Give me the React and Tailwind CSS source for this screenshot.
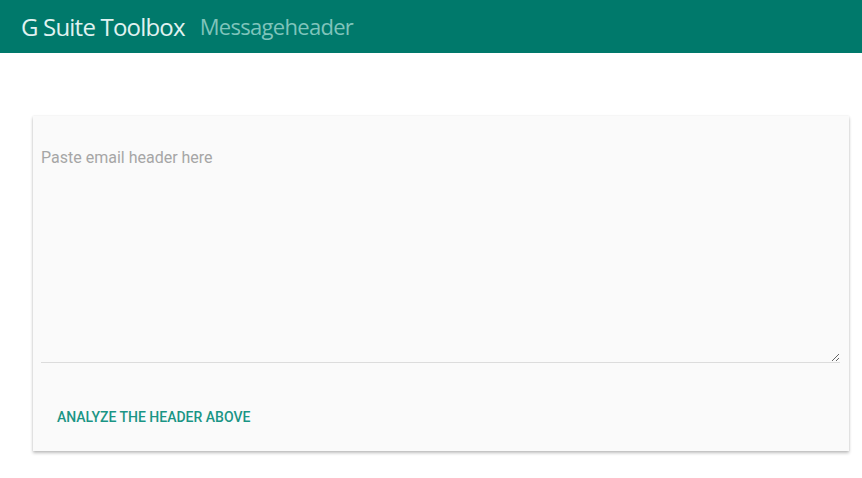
export default function App() {
  return (
    <div className="min-h-[478px] bg-white" style={{ fontFamily: "Roboto, 'Noto Sans', sans-serif" }}>
      {/* Top bar */}
      <header className="h-[53px] bg-[#00796b] flex items-center pl-[21px] gap-[15px]">
        <span className="text-[24px] tracking-[-0.8px] text-[#e0f2f1] font-normal" style={{ fontFamily: "'Open Sans', Roboto, sans-serif" }}>
          G Suite Toolbox
        </span>
        <span className="text-[22px] tracking-[-0.7px] text-[#7fc4bb]" style={{ fontFamily: "'Open Sans', Roboto, sans-serif" }}>
          Messageheader
        </span>
      </header>

      {/* Card */}
      <div className="pl-[33px] pr-[13px] pt-[63px]">
        <div className="bg-[#fafafa] shadow-[0_2px_3px_rgba(0,0,0,0.25),0_0_2px_rgba(0,0,0,0.08)] pl-[8px] pr-[9px] pt-[32px] pb-[16px]">
          <textarea
            placeholder="Paste email header here"
            className="block w-full h-[215px] bg-transparent border-0 border-b border-[#dcdcdc] outline-none text-[16px] leading-[20px] text-gray-700 placeholder:text-[#a6a6a6] resize-y"
          />
          <div className="mt-[36px]">
            <button className="h-[36px] px-[16px] text-[14px] font-medium tracking-[0px] text-[#1a9585] uppercase">
              Analyze the header above
            </button>
          </div>
        </div>
      </div>
    </div>
  );
}
